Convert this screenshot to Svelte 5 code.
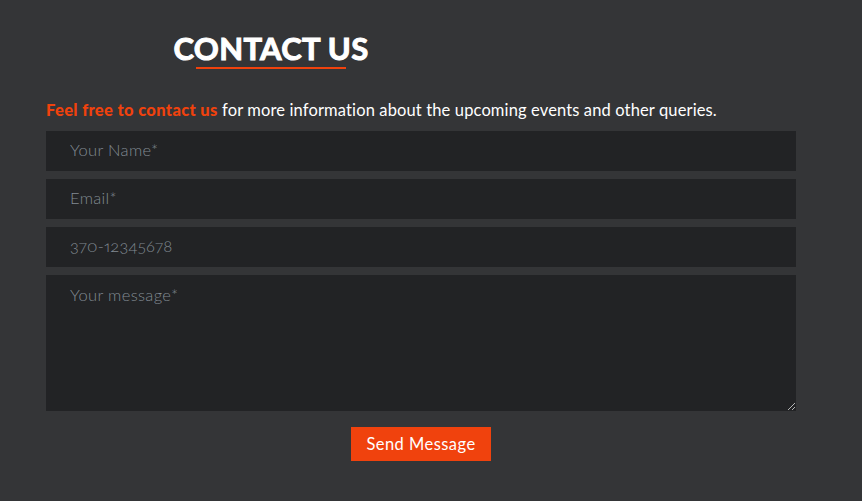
<script>
  let name = $state('');
  let email = $state('');
  let phone = $state('');
  let message = $state('');
</script>

<section class="contact">
  <h2>CONTACT US</h2>
  <form onsubmit={(e) => e.preventDefault()}>
    <p><strong>Feel free to contact us</strong> <span>for more information about the upcoming events and other queries.</span></p>
    <input class="name" type="text" placeholder="Your Name*" bind:value={name} />
    <input class="email" type="email" placeholder="Email*" bind:value={email} />
    <input class="phone" type="tel" placeholder="370-12345678" bind:value={phone} />
    <div class="message">
      <textarea placeholder="Your message*" bind:value={message}></textarea>
      <svg class="grip" width="9" height="9" viewBox="0 0 9 9" shape-rendering="crispEdges" aria-hidden="true">
        <path d="M1 7h1v1H1zM2 6h1v1H2zM3 5h1v1H3zM4 4h1v1H4zM5 3h1v1H5zM6 2h1v1H6zM7 1h1v1H7zM5 7h1v1H5zM6 6h1v1H6zM7 5h1v1H7z" fill="#b4b5b6" />
      </svg>
    </div>
    <button type="submit">Send Message</button>
  </form>
</section>

<style>
  :global(body) {
    margin: 0;
    background: #343537;
  }
  .contact {
    box-sizing: border-box;
    width: 862px;
    height: 501px;
    padding: 29px 66px 0 46px;
    overflow: hidden;
    background: #343537;
    color: #fff;
    font-family: Lato, 'Open Sans', sans-serif;
    font-size: 16.5px;
  }
  h2 {
    display: flex;
    flex-direction: column;
    align-items: center;
    width: 450px;
    height: 40px;
    margin: 0;
    padding-top: 1px;
    box-sizing: border-box;
    font-size: 31px;
    font-weight: 700;
    line-height: 37px;
    letter-spacing: 0.3px;
    white-space: nowrap;
    -webkit-text-stroke: 1px #fff;
  }
  h2::after {
    content: '';
    width: 150px;
    height: 2px;
    background: #f0420d;
  }
  form {
    display: flex;
    flex-direction: column;
    gap: 8px;
    padding-top: 30px;
  }
  p {
    height: 24px;
    margin: 0;
    line-height: 22px;
    letter-spacing: 0.13px;
    white-space: nowrap;
  }
  strong {
    color: #f0420d;
    font-weight: 900;
    letter-spacing: 0.35px;
  }
  input,
  textarea {
    box-sizing: border-box;
    display: block;
    width: 100%;
    height: 40px;
    margin: 0;
    padding: 7px 24px 9px;
    border: 0;
    border-radius: 0;
    outline: 0;
    background: #222325;
    color: #fff;
    font: inherit;
    font-weight: 300;
    letter-spacing: 0.35px;
    line-height: 24px;
    font-variant-numeric: oldstyle-nums proportional-nums;
  }
  textarea {
    height: 136px;
    padding-top: 8px;
    resize: none;
  }
  ::placeholder {
    color: #818a92;
    opacity: 1;
  }
  .phone {
    letter-spacing: 0.2px;
  }
  .message {
    position: relative;
  }
  .grip {
    position: absolute;
    right: 0;
    bottom: 0;
  }
  button {
    align-self: center;
    width: 140px;
    height: 34px;
    margin: 8px 0 0;
    padding: 0;
    border: 0;
    background: #f0420d;
    color: #fff;
    font: inherit;
    letter-spacing: 0.45px;
    line-height: 34px;
  }
</style>
